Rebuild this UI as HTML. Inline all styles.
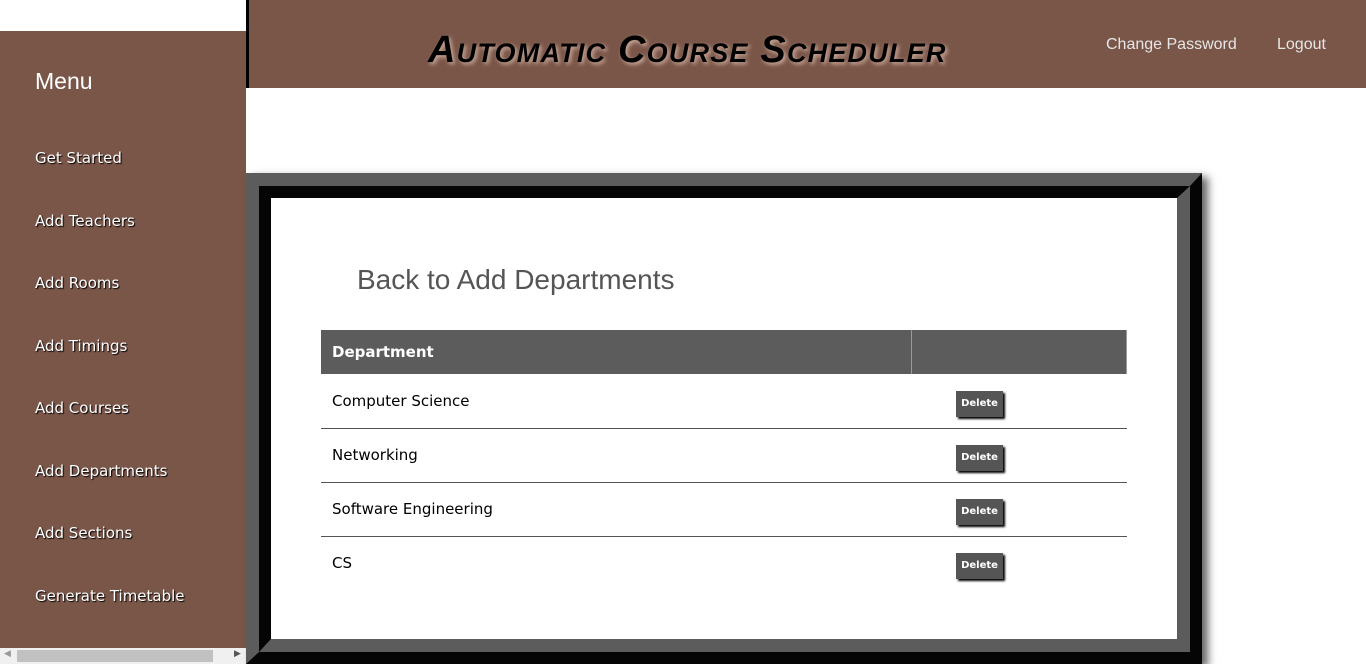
<!DOCTYPE html>
<html><head><style>
*{margin:0;padding:0;box-sizing:border-box}
html,body{width:1366px;height:664px;overflow:hidden}
body{background:#fff;position:relative;font-family:"DejaVu Sans",Verdana,sans-serif}
#side{position:absolute;left:0;top:31px;width:246px;height:617px;background:#7a5649}
#side .m{position:absolute;left:35px;top:37px;color:#fff;font-size:23px;font-family:"Liberation Sans",sans-serif}
#side a{position:absolute;left:35px;color:#fff;font-size:15px;text-decoration:none;text-shadow:1px 1px 1px #000}
#sb{position:absolute;left:0;top:648px;width:246px;height:16px;background:#f0f0f0}
#sb .t{position:absolute;left:17px;top:2px;width:196px;height:12px;background:#c1c1c1}
#hd{position:absolute;left:246px;top:0;width:1120px;height:88px;background:#7a5649;border-left:3px solid #000}
#hd h1{position:absolute;left:179px;top:29px;font-family:"Liberation Sans",sans-serif;font-weight:bold;font-style:italic;font-variant:small-caps;font-size:38px;letter-spacing:1.2px;color:#000;text-shadow:2px 2px 4px #d0b0a0;white-space:nowrap}
#hd a{position:absolute;top:36px;color:#e6e6e6;font-size:16px;font-family:"Liberation Sans",sans-serif}
#box{position:absolute;left:246px;top:173px;width:956px;height:491px;border-style:solid;border-width:13px 12px 12px 13px;border-color:#5c5c5c #050505 #050505 #5c5c5c;box-shadow:6px 4px 8px rgba(0,0,0,.6)}
#in{position:absolute;left:0;top:0;right:0;bottom:0;border:12px solid;border-width:12px 13px 13px 12px;border-color:#050505 #5c5c5c #5c5c5c #050505;background:#fff}
#back{position:absolute;left:357px;top:264px;font-size:28px;color:#555;font-family:"Liberation Sans",sans-serif}
table{position:absolute;left:321px;top:330px;width:806px;border-collapse:collapse;font-size:15px}
th{background:#5c5c5c;color:#fff;text-align:left;height:44px;padding-left:11px;border-right:1px solid #999;font-size:15px}
td{height:54px;padding-left:11px;border-bottom:1px solid #555;color:#000}
tr:last-child td{border-bottom:none}
.b{display:inline-block;margin-left:34px;margin-top:6px;width:47px;height:26px;background:#555;color:#fff;font-size:10px;font-weight:bold;line-height:26px;text-align:center;box-shadow:2px 2px 2px #000}
</style></head><body>
<div id="side"><div class="m">Menu</div>
<a style="top:118px">Get Started</a><a style="top:181px">Add Teachers</a><a style="top:243px">Add Rooms</a><a style="top:306px">Add Timings</a><a style="top:368px">Add Courses</a><a style="top:431px">Add Departments</a><a style="top:493px">Add Sections</a><a style="top:556px">Generate Timetable</a></div>
<div id="sb"><div class="t"></div><span style="position:absolute;left:4px;top:1px;font-size:9px;color:#999">◀</span><span style="position:absolute;left:234px;top:1px;font-size:9px;color:#555">▶</span></div>
<div id="hd"><h1>Automatic Course Scheduler</h1><a style="left:857px">Change Password</a><a style="left:1028px">Logout</a></div>
<div id="box"><div id="in"></div></div>
<div id="back">Back to Add Departments</div>
<table><tr><th style="width:590px">Department</th><th></th></tr>
<tr><td>Computer Science</td><td><span class="b">Delete</span></td></tr>
<tr><td>Networking</td><td><span class="b">Delete</span></td></tr>
<tr><td>Software Engineering</td><td><span class="b">Delete</span></td></tr>
<tr><td>CS</td><td><span class="b">Delete</span></td></tr>
</table>
</body></html>
